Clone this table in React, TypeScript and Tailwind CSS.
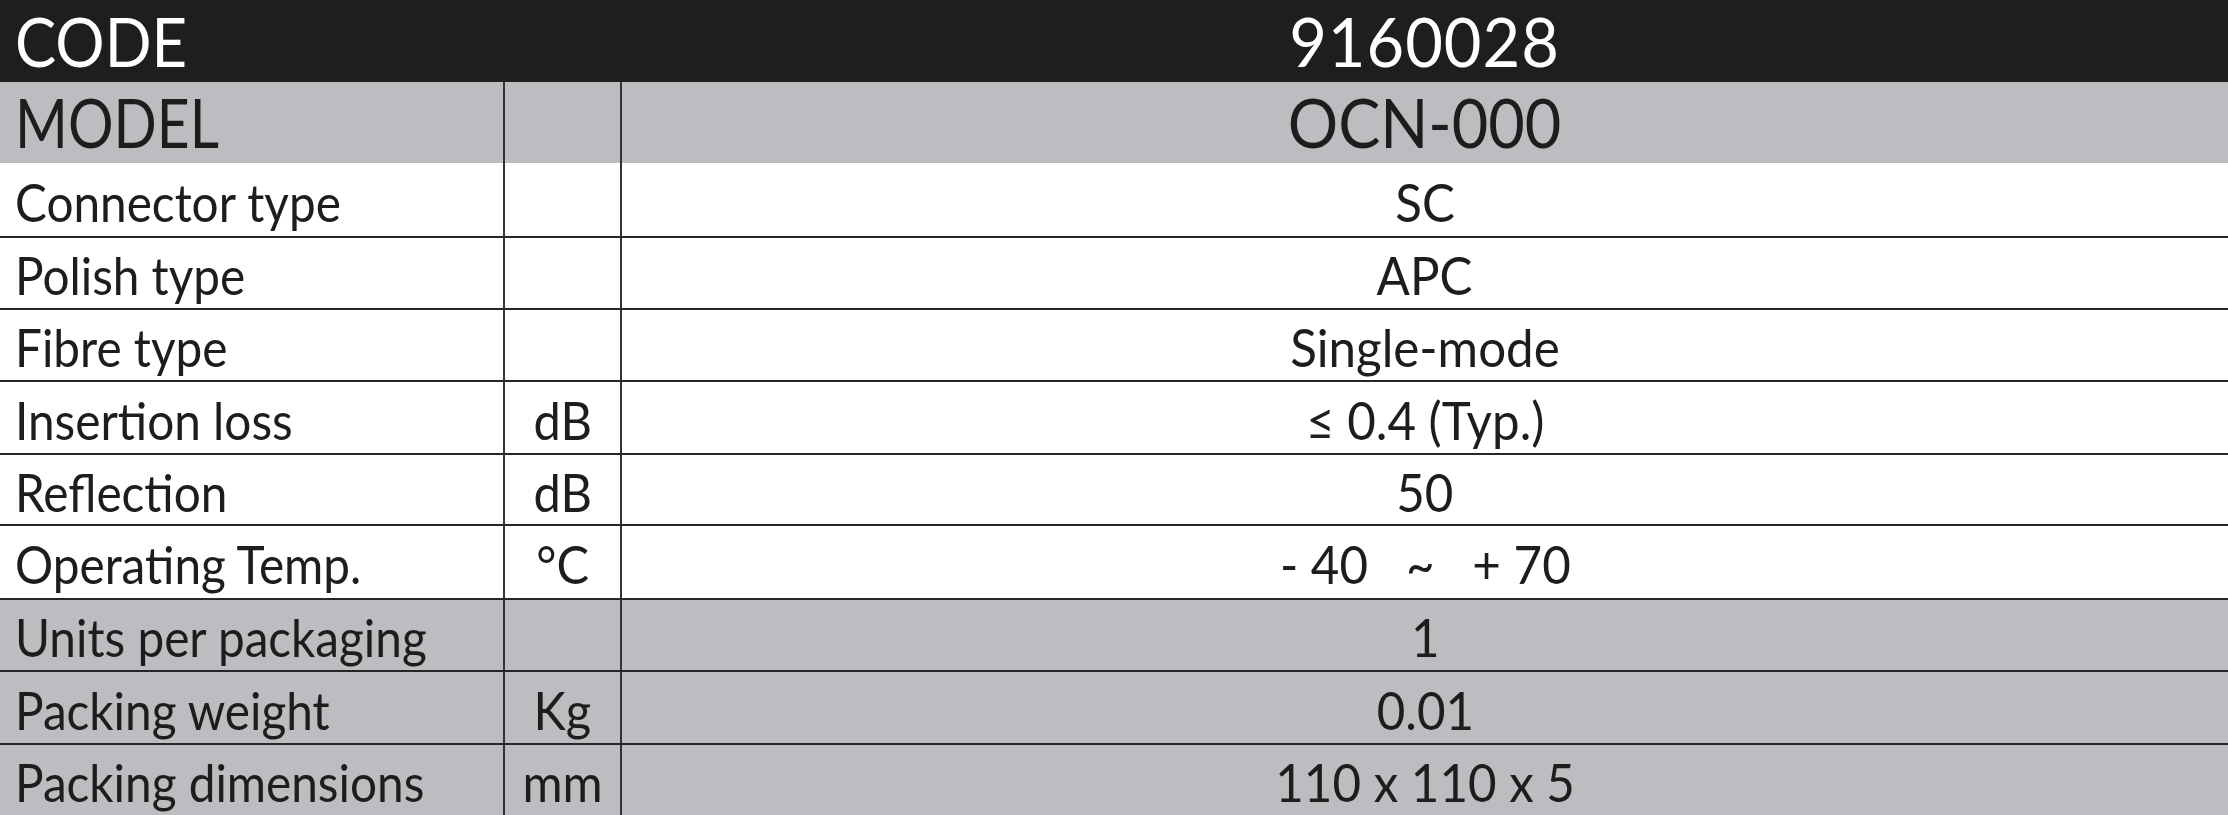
import React from "react";

type Row = {
  label: string;
  unit: string;
  value: string;
  grey: boolean;
  h: string;
  first?: boolean;
};

const rows: Row[] = [
  { label: "Connector type", unit: "", value: "SC", grey: false, h: "h-[73px]", first: true },
  { label: "Polish type", unit: "", value: "APC", grey: false, h: "h-[72px]" },
  { label: "Fibre type", unit: "", value: "Single-mode", grey: false, h: "h-[72px]" },
  { label: "Insertion loss", unit: "dB", value: "≤ 0.4 (Typ.)", grey: false, h: "h-[73px]" },
  { label: "Reflection", unit: "dB", value: "50", grey: false, h: "h-[71px]" },
  { label: "Operating Temp.", unit: "°C", value: "- 40   ~   + 70", grey: false, h: "h-[74px]" },
  { label: "Units per packaging", unit: "", value: "1", grey: true, h: "h-[72px]" },
  { label: "Packing weight", unit: "Kg", value: "0.01", grey: true, h: "h-[73px]" },
  { label: "Packing dimensions", unit: "mm", value: "110 x 110 x 5", grey: true, h: "h-[72px]" },
];

const font = { fontFamily: "Lato, 'Open Sans', sans-serif" };

export default function App() {
  return (
    <div className="w-[2228px] h-[815px] overflow-hidden bg-white text-[#1d1d1b]" style={font}>
      {/* CODE header */}
      <div className="h-[82px] bg-[#1e1e1c] text-white grid grid-cols-[622px_1fr] items-center text-[67px] leading-none">
        <div className="pl-[15px]">
          <span className="inline-block origin-left scale-x-[0.92]">CODE</span>
        </div>
        <div className="text-center">
          <span className="inline-block origin-center scale-x-[0.97] tracking-[1px]">9160028</span>
        </div>
      </div>
      {/* MODEL row */}
      <div className="h-[81px] bg-[#bcbdc0] grid grid-cols-[505px_117px_1fr] items-stretch text-[67px] leading-none">
        <div className="pl-[15px] flex items-center border-r-2 border-[#333]">
          <span className="inline-block origin-left scale-x-[0.85]">MODEL</span>
        </div>
        <div className="border-r-2 border-[#333]" />
        <div className="flex items-center justify-center">
          <span className="inline-block origin-center scale-x-[0.94]">OCN-000</span>
        </div>
      </div>
      {rows.map((r) => (
        <div
          key={r.label}
          className={`${r.h} grid grid-cols-[505px_117px_1fr] items-stretch text-[53px] leading-none ${
            r.grey ? "bg-[#bcbdc0]" : "bg-white"
          } ${r.first ? "" : "border-t-2 border-[#262626]"}`}
        >
          <div className="pl-[15px] flex items-center pt-[3px] border-r-2 border-[#333]">
            <span className="inline-block origin-left scale-x-[0.9] whitespace-nowrap">{r.label}</span>
          </div>
          <div className="flex items-center justify-center pt-[3px] border-r-2 border-[#333]">
            <span className="inline-block origin-center scale-x-[0.92]">{r.unit}</span>
          </div>
          <div className="flex items-center justify-center pt-[3px]">
            <span className="inline-block origin-center scale-x-[0.93] whitespace-pre">{r.value}</span>
          </div>
        </div>
      ))}
    </div>
  );
}
